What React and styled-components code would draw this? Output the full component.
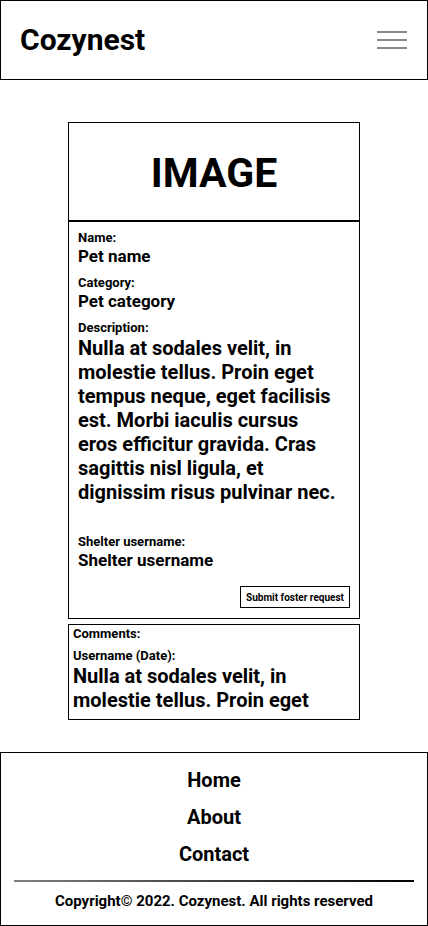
import React from 'react';
import styled, { createGlobalStyle } from 'styled-components';

const GlobalStyle = createGlobalStyle`
  body {
    margin: 0;
    background: #fff;
    color: #000;
    font-family: Roboto, 'Liberation Sans', Arial, sans-serif;
  }
  * { box-sizing: border-box; }
`;

const Page = styled.div`
  width: 428px;
  display: flex;
  flex-direction: column;
`;

const Header = styled.header`
  height: 80px;
  border: 1px solid #000;
  display: flex;
  align-items: center;
  justify-content: space-between;
  padding: 0 20px 0 19px;
`;

const Logo = styled.h1`
  margin: 0;
  font-size: 30px;
  font-weight: 700;
  line-height: 1;
`;

const Burger = styled.button`
  width: 30px;
  height: 18px;
  padding: 0;
  border: none;
  background: none;
  display: flex;
  flex-direction: column;
  justify-content: space-between;
`;

const BurgerLine = styled.span`
  display: block;
  height: 2px;
  background: #888;
`;

const Main = styled.main`
  display: flex;
  flex-direction: column;
  align-items: center;
  gap: 5px;
  padding-top: 42px;
`;

const Card = styled.section`
  width: 292px;
  border: 1px solid #000;
`;

const ImageBox = styled.div`
  height: 99px;
  padding-top: 3px;
  border-bottom: 2px solid #000;
  display: flex;
  align-items: center;
  justify-content: center;
  font-size: 41px;
  font-weight: 700;
`;

const Info = styled.div`
  padding: 8px 19px 10px 9px;
  display: flex;
  flex-direction: column;
`;

const Label = styled.div`
  font-size: 13px;
  font-weight: 700;
  line-height: 16px;
  margin-top: ${p => p.$top || 0}px;
`;

const Value = styled.div`
  font-size: 17px;
  font-weight: 700;
  line-height: 20px;
`;

const LongText = styled.p`
  margin: 0;
  font-size: 20px;
  font-weight: 700;
  line-height: 24px;
`;

const Actions = styled.div`
  display: flex;
  justify-content: flex-end;
  margin: 16px -10px 0 0;
`;

const SubmitButton = styled.button`
  height: 22px;
  padding: 0 5px;
  border: 1px solid #000;
  background: #fff;
  font-family: inherit;
  font-size: 10px;
  font-weight: 700;
  color: #000;
`;

const Comments = styled.section`
  width: 292px;
  border: 1px solid #000;
  padding: 1px 4px 7px 4px;
`;

const Footer = styled.footer`
  margin-top: 32px;
  border: 1px solid #000;
  height: 174px;
  display: flex;
  flex-direction: column;
  align-items: center;
  padding: 9px 13px 0;
`;

const FooterLink = styled.a`
  font-size: 20px;
  font-weight: 700;
  line-height: 37px;
  color: #000;
  text-decoration: none;
`;

const Rule = styled.hr`
  width: 100%;
  height: 2px;
  margin: 7px 0 0;
  border: none;
  background: linear-gradient(to right, #808080, #000);
`;

const Copyright = styled.p`
  margin: 10px 0 0;
  font-size: 15px;
  font-weight: 700;
  line-height: 18px;
`;

const lorem = 'Nulla at sodales velit, in molestie tellus. Proin eget tempus neque, eget facilisis est. Morbi iaculis cursus eros efficitur gravida. Cras sagittis nisl ligula, et dignissim risus pulvinar nec.';

export default function App() {
  return (
    <Page>
      <GlobalStyle />
      <Header>
        <Logo>Cozynest</Logo>
        <Burger aria-label="menu">
          <BurgerLine />
          <BurgerLine />
          <BurgerLine />
        </Burger>
      </Header>
      <Main>
        <Card>
          <ImageBox>IMAGE</ImageBox>
          <Info>
            <Label>Name:</Label>
            <Value>Pet name</Value>
            <Label $top={9}>Category:</Label>
            <Value>Pet category</Value>
            <Label $top={9}>Description:</Label>
            <LongText>{lorem}</LongText>
            <Label $top={30}>Shelter username:</Label>
            <Value>Shelter username</Value>
            <Actions>
              <SubmitButton>Submit foster request</SubmitButton>
            </Actions>
          </Info>
        </Card>
        <Comments>
          <Label>Comments:</Label>
          <Label $top={6}>Username (Date):</Label>
          <LongText>Nulla at sodales velit, in molestie tellus. Proin eget</LongText>
        </Comments>
      </Main>
      <Footer>
        <FooterLink href="#">Home</FooterLink>
        <FooterLink href="#">About</FooterLink>
        <FooterLink href="#">Contact</FooterLink>
        <Rule />
        <Copyright>Copyright© 2022. Cozynest. All rights reserved</Copyright>
      </Footer>
    </Page>
  );
}
